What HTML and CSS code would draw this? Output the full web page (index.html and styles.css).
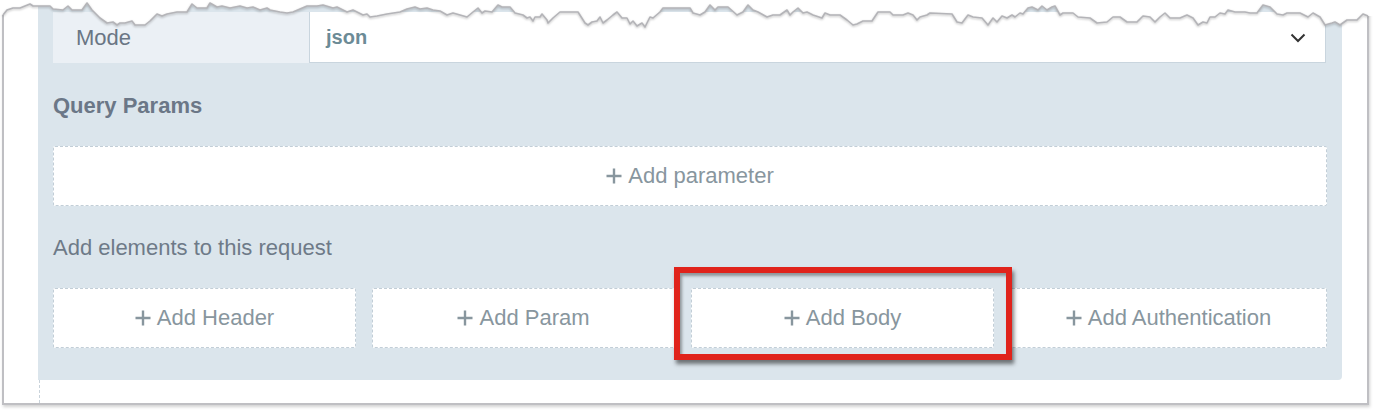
FILE: index.html
```html
<!DOCTYPE html>
<html lang="en">
<head>
<meta charset="utf-8">
<title>Request elements</title>
<link rel="stylesheet" href="styles.css">
</head>
<body>
<div class="page">
  <div class="frame">
    <div class="panel">
      <div class="mode-row">
        <div class="mode-label">Mode</div>
        <div class="mode-select">
          <span class="mode-value">json</span>
          <svg class="chevron" width="16" height="10" viewBox="0 0 16 10"><polyline points="1.5,1.5 8,8 14.5,1.5" fill="none" stroke="#333" stroke-width="2"/></svg>
        </div>
      </div>
      <div class="section-title">Query Params</div>
      <div class="add-box add-param">
        <svg class="plus" width="16" height="16" viewBox="0 0 16 16"><path d="M8 0.5V15.5M0.5 8H15.5" stroke="currentColor" stroke-width="2.4" fill="none"/></svg>Add parameter
      </div>
      <div class="section-sub">Add elements to this request</div>
      <div class="element-grid">
        <div class="add-box"><svg class="plus" width="16" height="16" viewBox="0 0 16 16"><path d="M8 0.5V15.5M0.5 8H15.5" stroke="currentColor" stroke-width="2.4" fill="none"/></svg>Add Header</div>
        <div class="add-box"><svg class="plus" width="16" height="16" viewBox="0 0 16 16"><path d="M8 0.5V15.5M0.5 8H15.5" stroke="currentColor" stroke-width="2.4" fill="none"/></svg>Add Param</div>
        <div class="add-box"><svg class="plus" width="16" height="16" viewBox="0 0 16 16"><path d="M8 0.5V15.5M0.5 8H15.5" stroke="currentColor" stroke-width="2.4" fill="none"/></svg>Add Body</div>
        <div class="add-box"><svg class="plus" width="16" height="16" viewBox="0 0 16 16"><path d="M8 0.5V15.5M0.5 8H15.5" stroke="currentColor" stroke-width="2.4" fill="none"/></svg>Add Authentication</div>
      </div>
    </div>
    <div class="dash-line"></div>
  </div>

  <div class="highlight"></div>

  <svg class="torn" width="1380" height="34" viewBox="0 0 1380 34">
    <path fill="#ffffff" d="M0,0 H1380 V16 H1368 L1363,14 L1357,20 L1347,20 L1340,25 L1335,22 L1332,23 L1325,25 L1320,17 L1313,13 L1308,17 L1300,13 L1287,13 L1283,15 L1277,14 L1270,7 L1263,5 L1257,13 L1250,13 L1245,12 L1235,12 L1228,10 L1225,14 L1220,13 L1215,17 L1210,17 L1207,23 L1203,22 L1198,25 L1193,18 L1187,15 L1180,18 L1170,18 L1165,13 L1160,17 L1155,22 L1150,17 L1143,16 L1137,22 L1127,22 L1120,17 L1113,17 L1107,22 L1097,23 L1090,18 L1078,17 L1073,13 L1063,13 L1060,15 L1055,6 L1052,7 L1047,10 L1042,6 L1038,10 L1032,7 L1028,8 L1023,14 L1020,13 L1015,17 L1012,15 L1007,18 L1002,16 L997,22 L993,18 L988,25 L982,18 L973,17 L968,15 L962,23 L957,22 L952,14 L930,13 L927,15 L920,17 L917,20 L913,15 L908,13 L903,15 L893,15 L890,12 L878,12 L872,21 L863,21 L857,24 L853,25 L847,20 L840,15 L830,15 L825,13 L822,18 L813,15 L807,12 L803,13 L798,8 L793,12 L790,15 L787,10 L780,15 L773,15 L767,17 L758,12 L753,10 L748,5 L743,12 L737,15 L728,7 L718,7 L715,10 L710,5 L705,12 L700,15 L693,13 L690,8 L663,8 L660,12 L653,18 L650,17 L645,27 L642,23 L637,26 L633,21 L630,24 L627,18 L622,18 L617,12 L613,15 L607,20 L603,23 L600,17 L597,21 L592,22 L588,25 L585,23 L578,12 L560,12 L553,18 L548,23 L547,20 L542,14 L540,17 L535,17 L533,21 L530,17 L527,18 L523,15 L515,13 L510,7 L502,7 L498,5 L492,12 L485,11 L482,13 L478,8 L473,12 L467,17 L460,15 L453,13 L447,15 L440,11 L433,10 L427,8 L420,9 L415,7 L407,9 L400,12 L387,14 L377,16 L370,17 L367,14 L363,15 L353,10 L347,12 L337,7 L333,8 L323,5 L317,6 L307,6 L293,12 L287,13 L280,12 L270,10 L267,8 L260,10 L253,7 L247,8 L240,6 L230,8 L222,6 L217,7 L210,3 L207,8 L197,8 L192,4 L187,12 L177,12 L167,14 L162,16 L157,14 L150,21 L145,25 L135,25 L132,21 L125,23 L120,23 L117,25 L113,22 L107,23 L100,18 L92,10 L87,3 L82,10 L72,10 L68,6 L63,10 L53,9 L50,6 L33,6 L30,4 L25,6 L20,8 L13,8 L7,10 L3,15 L0,15 Z"/>
    <polyline class="torn-line" fill="none" stroke="#b4b4b8" stroke-width="1.6" stroke-linejoin="round" points="3,15 7,10 13,8 20,8 25,6 30,4 33,6 50,6 53,9 63,10 68,6 72,10 82,10 87,3 92,10 100,18 107,23 113,22 117,25 120,23 125,23 132,21 135,25 145,25 150,21 157,14 162,16 167,14 177,12 187,12 192,4 197,8 207,8 210,3 217,7 222,6 230,8 240,6 247,8 253,7 260,10 267,8 270,10 280,12 287,13 293,12 307,6 317,6 323,5 333,8 337,7 347,12 353,10 363,15 367,14 370,17 377,16 387,14 400,12 407,9 415,7 420,9 427,8 433,10 440,11 447,15 453,13 460,15 467,17 473,12 478,8 482,13 485,11 492,12 498,5 502,7 510,7 515,13 523,15 527,18 530,17 533,21 535,17 540,17 542,14 547,20 548,23 553,18 560,12 578,12 585,23 588,25 592,22 597,21 600,17 603,23 607,20 613,15 617,12 622,18 627,18 630,24 633,21 637,26 642,23 645,27 650,17 653,18 660,12 663,8 690,8 693,13 700,15 705,12 710,5 715,10 718,7 728,7 737,15 743,12 748,5 753,10 758,12 767,17 773,15 780,15 787,10 790,15 793,12 798,8 803,13 807,12 813,15 822,18 825,13 830,15 840,15 847,20 853,25 857,24 863,21 872,21 878,12 890,12 893,15 903,15 908,13 913,15 917,20 920,17 927,15 930,13 952,14 957,22 962,23 968,15 973,17 982,18 988,25 993,18 997,22 1002,16 1007,18 1012,15 1015,17 1020,13 1023,14 1028,8 1032,7 1038,10 1042,6 1047,10 1052,7 1055,6 1060,15 1063,13 1073,13 1078,17 1090,18 1097,23 1107,22 1113,17 1120,17 1127,22 1137,22 1143,16 1150,17 1155,22 1160,17 1165,13 1170,18 1180,18 1187,15 1193,18 1198,25 1203,22 1207,23 1210,17 1215,17 1220,13 1225,14 1228,10 1235,12 1245,12 1250,13 1257,13 1263,5 1270,7 1277,14 1283,15 1287,13 1300,13 1308,17 1313,13 1320,17 1325,25 1332,23 1335,22 1340,25 1347,20 1357,20 1363,14 1368,16"/>
  </svg>
</div>
</body>
</html>
```

FILE: styles.css
```css
html, body {
  margin: 0;
  padding: 0;
  background: #ffffff;
}

body {
  font-family: "Liberation Sans", Arial, Helvetica, sans-serif;
  width: 1380px;
  height: 418px;
  overflow: hidden;
}

.page {
  position: relative;
  width: 1380px;
  height: 418px;
}

.frame {
  margin-left: 2px;
  width: 1367px;
  box-sizing: border-box;
  background: #ffffff;
  border: 2px solid #bfbfc3;
  border-top: none;
  padding-left: 34px;
  box-shadow: 1px 2px 3px rgba(0, 0, 0, 0.18);
}

.panel {
  width: 1304px;
  box-sizing: border-box;
  background: #dbe5ec;
  padding: 12px 15px 32px 15px;
  border-bottom-right-radius: 4px;
}

.mode-row {
  display: flex;
  height: 51px;
  margin-right: 1px;
}

.mode-label {
  width: 256px;
  flex: none;
  background: #ebf0f5;
  display: flex;
  align-items: center;
  padding-left: 23px;
  box-sizing: border-box;
  font-size: 22px;
  color: #6a7684;
}

.mode-select {
  flex: 1;
  background: #ffffff;
  border: 1px solid #c9d5de;
  border-top: none;
  display: flex;
  align-items: center;
  justify-content: space-between;
  padding: 0 19px 0 16px;
}

.mode-value {
  font-size: 20px;
  font-weight: bold;
  color: #6c8b96;
}

.chevron {
  display: block;
  margin-top: 1px;
}

.section-title {
  margin-top: 30px;
  font-size: 22px;
  line-height: 26px;
  font-weight: bold;
  color: #6b7787;
}

.section-sub {
  margin-top: 29px;
  font-size: 22px;
  line-height: 26px;
  color: #6e7a88;
}

.add-box {
  height: 60px;
  box-sizing: border-box;
  background: #ffffff;
  border: 1px dashed #c2ced7;
  border-radius: 2px;
  display: flex;
  align-items: center;
  justify-content: center;
  font-size: 22px;
  color: #88969e;
}

.add-param {
  margin-top: 27px;
}

.plus {
  display: block;
  margin-right: 6px;
  flex: none;
}

.element-grid {
  margin-top: 27px;
  display: grid;
  grid-template-columns: 303px 303px 303px 1fr;
  column-gap: 16px;
}

.dash-line {
  margin-left: 1px;
  height: 23px;
  border-left: 1px dashed #c9d3db;
}

.highlight {
  position: absolute;
  left: 674px;
  top: 267px;
  width: 338px;
  height: 93px;
  box-sizing: border-box;
  border: 6px solid #e0231b;
  box-shadow: 2px 4px 4px rgba(0, 0, 0, 0.5), inset 2px 3px 3px rgba(0, 0, 0, 0.35);
}

.torn {
  position: absolute;
  left: 0;
  top: 0;
  display: block;
}

.torn-line {
  filter: drop-shadow(0 1.5px 1px rgba(0, 0, 0, 0.25));
}
```
